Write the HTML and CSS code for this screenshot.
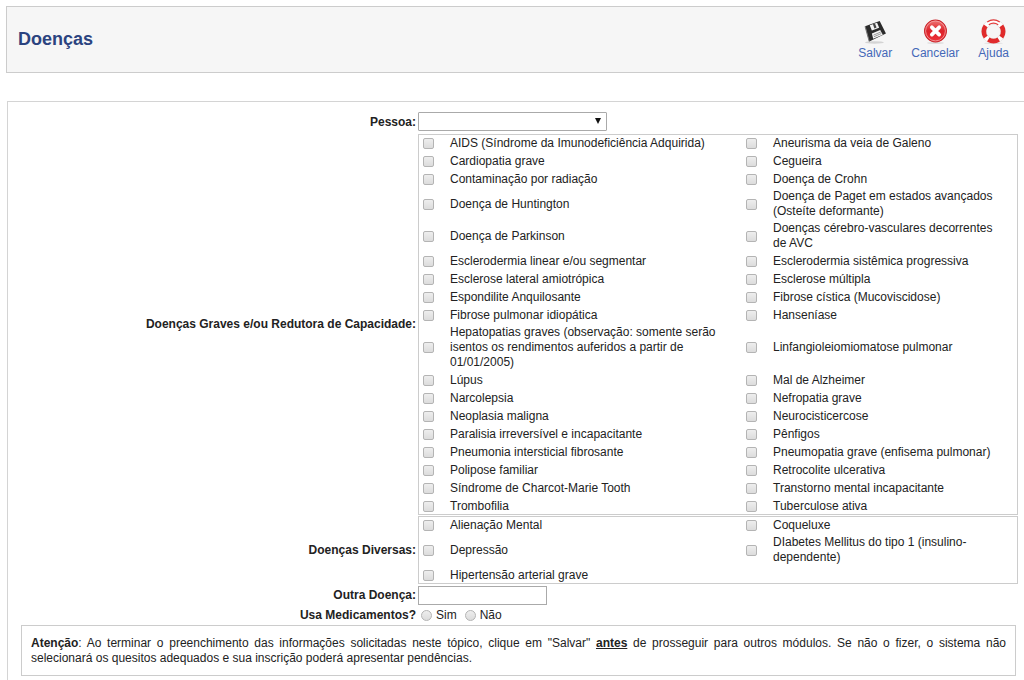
FILE: index.html
```
<!DOCTYPE html>
<html lang="pt-BR">
<head>
<meta charset="utf-8">
<title>Doenças</title>
<link rel="stylesheet" href="styles.css">
</head>
<body>
<header class="topbar">
  <h1 class="title">Doenças</h1>
  <nav class="tools">
    <button type="button" class="tool">
      <svg class="icon" viewBox="0 0 24 24" aria-hidden="true">
        <ellipse cx="11" cy="22.500" rx="9" ry="1.200" fill="#d4d4d4"/>
        <path d="M2 7 16 2 22 14 6 21.500Z" fill="#2b2b2b"/>
        <path d="M6.500 6 13.500 3.500 15.500 8.500 8.500 11Z" fill="#f4f4f4"/>
        <path d="M9.500 5 11.500 4.300 13 8.200 11 9Z" fill="#444"/>
        <path d="M8.500 14 16.500 10.500 19 15 9.800 19Z" fill="#f4f4f4"/>
        <path d="M10 15.500 17 12.500M10.500 17 17.500 14" stroke="#888" stroke-width="0.800"/>
        <path d="M2 7 6 21.500" stroke="#777" stroke-width="1"/>
      </svg>
      <span>Salvar</span>
    </button>
    <button type="button" class="tool">
      <svg class="icon" viewBox="0 0 24 24" aria-hidden="true">
        <defs><linearGradient id="red" x1="0" y1="0" x2="0" y2="1"><stop offset="0" stop-color="#ee7777"/><stop offset="0.500" stop-color="#dd2229"/><stop offset="1" stop-color="#f0333b"/></linearGradient></defs>
        <ellipse cx="12" cy="23" rx="8" ry="1" fill="#ddd"/>
        <circle cx="12" cy="11.500" r="10.500" fill="url(#red)" stroke="#c9252b"/>
        <circle cx="12" cy="11.500" r="9.500" fill="none" stroke="#f3a0a0" stroke-width="0.800"/>
        <path d="M8.500 8 15.500 15M15.500 8 8.500 15" stroke="#fff" stroke-width="3.600" stroke-linecap="round"/>
      </svg>
      <span>Cancelar</span>
    </button>
    <button type="button" class="tool">
      <svg class="icon" viewBox="0 0 24 24" aria-hidden="true">
        <ellipse cx="12" cy="23.300" rx="9" ry="0.700" fill="#ddd"/>
        <circle cx="12" cy="12" r="9.200" fill="none" stroke="#ddd" stroke-width="5"/>
        <circle cx="12" cy="12" r="9.200" fill="none" stroke="#fff" stroke-width="4"/>
        <g fill="none" stroke="#e02b2b" stroke-width="4.500">
          <path d="M19.500 6.600A9.200 9.200 0 0 1 19.500 17.400"/>
          <path d="M4.500 6.600A9.200 9.200 0 0 0 4.500 17.400"/>
          <path d="M7 19.700A9.200 9.200 0 0 0 17 19.700"/>
        </g>
        <path d="M6 2.800A11 11 0 0 1 18 2.800M7.500 5.500A8 8 0 0 1 16.500 5.500" fill="none" stroke="#e33a3a" stroke-width="1.200"/>
      </svg>
      <span>Ajuda</span>
    </button>
  </nav>
</header>

<form class="panel">
  <div class="row">
    <label class="caption" for="pessoa">Pessoa:</label>
    <div class="select-wrap"><select id="pessoa" class="select"><option></option></select></div>
  </div>
  <div class="row" role="group" aria-labelledby="graves">
    <span class="caption" id="graves">Doenças Graves e/ou Redutora de Capacidade:</span>
    <div class="list">
      <label class="item"><input type="checkbox" class="check"><span>AIDS (Síndrome da Imunodeficiência Adquirida)</span></label>
      <label class="item"><input type="checkbox" class="check"><span>Aneurisma da veia de Galeno</span></label>
      <label class="item"><input type="checkbox" class="check"><span>Cardiopatia grave</span></label>
      <label class="item"><input type="checkbox" class="check"><span>Cegueira</span></label>
      <label class="item"><input type="checkbox" class="check"><span>Contaminação por radiação</span></label>
      <label class="item"><input type="checkbox" class="check"><span>Doença de Crohn</span></label>
      <label class="item"><input type="checkbox" class="check"><span>Doença de Huntington</span></label>
      <label class="item"><input type="checkbox" class="check"><span>Doença de Paget em estados avançados (Osteíte deformante)</span></label>
      <label class="item"><input type="checkbox" class="check"><span>Doença de Parkinson</span></label>
      <label class="item"><input type="checkbox" class="check"><span>Doenças cérebro-vasculares decorrentes de AVC</span></label>
      <label class="item"><input type="checkbox" class="check"><span>Esclerodermia linear e/ou segmentar</span></label>
      <label class="item"><input type="checkbox" class="check"><span>Esclerodermia sistêmica progressiva</span></label>
      <label class="item"><input type="checkbox" class="check"><span>Esclerose lateral amiotrópica</span></label>
      <label class="item"><input type="checkbox" class="check"><span>Esclerose múltipla</span></label>
      <label class="item"><input type="checkbox" class="check"><span>Espondilite Anquilosante</span></label>
      <label class="item"><input type="checkbox" class="check"><span>Fibrose cística (Mucoviscidose)</span></label>
      <label class="item"><input type="checkbox" class="check"><span>Fibrose pulmonar idiopática</span></label>
      <label class="item"><input type="checkbox" class="check"><span>Hanseníase</span></label>
      <label class="item"><input type="checkbox" class="check"><span>Hepatopatias graves (observação: somente serão isentos os rendimentos auferidos a partir de 01/01/2005)</span></label>
      <label class="item"><input type="checkbox" class="check"><span>Linfangioleiomiomatose pulmonar</span></label>
      <label class="item"><input type="checkbox" class="check"><span>Lúpus</span></label>
      <label class="item"><input type="checkbox" class="check"><span>Mal de Alzheimer</span></label>
      <label class="item"><input type="checkbox" class="check"><span>Narcolepsia</span></label>
      <label class="item"><input type="checkbox" class="check"><span>Nefropatia grave</span></label>
      <label class="item"><input type="checkbox" class="check"><span>Neoplasia maligna</span></label>
      <label class="item"><input type="checkbox" class="check"><span>Neurocisticercose</span></label>
      <label class="item"><input type="checkbox" class="check"><span>Paralisia irreversível e incapacitante</span></label>
      <label class="item"><input type="checkbox" class="check"><span>Pênfigos</span></label>
      <label class="item"><input type="checkbox" class="check"><span>Pneumonia intersticial fibrosante</span></label>
      <label class="item"><input type="checkbox" class="check"><span>Pneumopatia grave (enfisema pulmonar)</span></label>
      <label class="item"><input type="checkbox" class="check"><span>Polipose familiar</span></label>
      <label class="item"><input type="checkbox" class="check"><span>Retrocolite ulcerativa</span></label>
      <label class="item"><input type="checkbox" class="check"><span>Síndrome de Charcot-Marie Tooth</span></label>
      <label class="item"><input type="checkbox" class="check"><span>Transtorno mental incapacitante</span></label>
      <label class="item"><input type="checkbox" class="check"><span>Trombofilia</span></label>
      <label class="item"><input type="checkbox" class="check"><span>Tuberculose ativa</span></label>
    </div>
  </div>
  <div class="row" role="group" aria-labelledby="diversas">
    <span class="caption" id="diversas">Doenças Diversas:</span>
    <div class="list">
      <label class="item"><input type="checkbox" class="check"><span>Alienação Mental</span></label>
      <label class="item"><input type="checkbox" class="check"><span>Coqueluxe</span></label>
      <label class="item"><input type="checkbox" class="check"><span>Depressão</span></label>
      <label class="item"><input type="checkbox" class="check"><span>DIabetes Mellitus do tipo 1 (insulino-dependente)</span></label>
      <label class="item"><input type="checkbox" class="check"><span>Hipertensão arterial grave</span></label>
    </div>
  </div>
  <div class="row">
    <label class="caption" for="outra">Outra Doença:</label>
    <input type="text" id="outra" class="text">
  </div>
  <div class="row" role="radiogroup" aria-labelledby="medicamentos">
    <span class="caption" id="medicamentos">Usa Medicamentos?</span>
    <div class="radios">
      <label class="option"><input type="radio" name="medicamentos" class="radio"><span>Sim</span></label>
      <label class="option"><input type="radio" name="medicamentos" class="radio"><span>Não</span></label>
    </div>
  </div>
  <p class="notice"><b>Atenção</b>: Ao terminar o preenchimento das informações solicitadas neste tópico, clique em "Salvar" <b><u>antes</u></b> de prosseguir para outros módulos. Se não o fizer, o sistema não selecionará os quesitos adequados e sua inscrição poderá apresentar pendências.</p>
</form>
</body>
</html>
```
FILE: styles.css
```
* { box-sizing: border-box; }
body {
  margin: 6px 0 0 6px;
  background: #fff;
  color: #222;
  font: 12px/15px "Liberation Sans", Arial, sans-serif;
}
.topbar {
  display: flex;
  align-items: center;
  justify-content: space-between;
  min-height: 67px;
  padding: 0 14px 2px 11px;
  background: #f6f6f6;
  border: 1px solid #ccc;
  border-right: 0;
}
.title { margin: 0; color: #2b437f; font-size: 18px; line-height: 22px; }
.tools { display: flex; gap: 17px; padding-top: 2px; }
.tool {
  display: flex;
  flex-direction: column;
  align-items: center;
  gap: 2px;
  padding: 0 1px;
  border: 0;
  background: none;
  color: #4468b8;
  font: inherit;
  cursor: pointer;
}
.icon { width: 25px; height: 25px; }
.panel {
  display: flex;
  flex-direction: column;
  gap: 1px;
  margin: 28px 0 0 1px;
  padding: 10px 6px 16px 0;
  border: 1px solid #d4d4d4;
  border-right: 0;
}
.row {
  display: grid;
  grid-template-columns: 408fr 600fr;
  column-gap: 2px;
  align-items: center;
}
.caption { text-align: right; font-weight: bold; }
.select-wrap { position: relative; width: 189px; height: 21px; }
.select-wrap::after {
  content: "";
  position: absolute;
  right: 6px;
  top: 6px;
  border: 3px solid transparent;
  border-top: 6px solid #111;
  border-bottom: 0;
  pointer-events: none;
}
.select {
  display: block;
  width: 100%;
  height: 19px;
  appearance: none;
  border: 1px solid #aaa;
  border-radius: 1px;
  background: #fff;
  font: inherit;
}
.list {
  display: grid;
  grid-template-columns: 323fr 277fr;
  outline: 1px solid #ccc;
  outline-offset: -1px;
}
.item {
  display: grid;
  grid-template-columns: 11px 1fr;
  column-gap: 16px;
  align-items: center;
  min-height: 18px;
  padding: 1px 12px 1px 5px;
}
.check, .radio {
  appearance: none;
  width: 11px;
  height: 11px;
  margin: 0;
  border: 1px solid #b4b4b4;
  border-radius: 2px;
  background: linear-gradient(#eee, #dcdcdc);
}
.radio { border-radius: 50%; }
.text {
  width: 129px;
  height: 19px;
  margin-top: 1px;
  border: 1px solid #aaa;
  background: #fff;
  font: inherit;
}
.radios { display: flex; gap: 8px; padding-left: 3px; }
.option { display: flex; align-items: center; gap: 4px; min-height: 18px; }
.notice {
  margin: 0 2px 0 13px;
  padding: 10px 9px 9px;
  border: 1px solid #ccc;
  text-align: justify;
}
```
